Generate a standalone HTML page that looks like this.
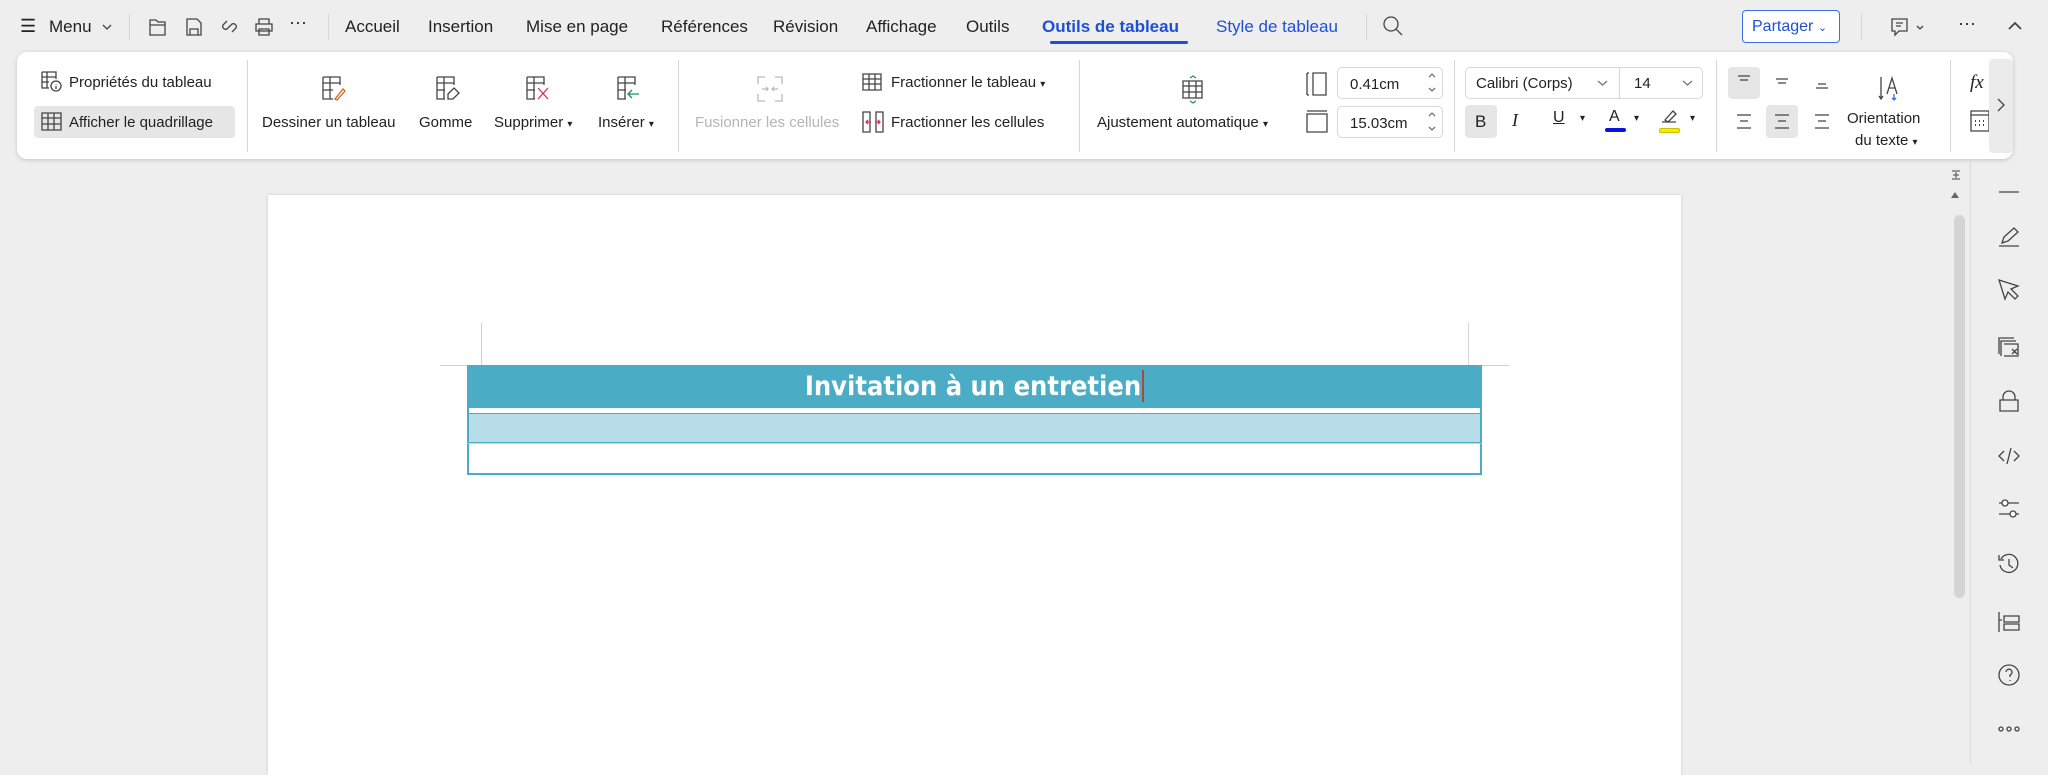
<!DOCTYPE html>
<html><head><meta charset="utf-8"><style>
*{margin:0;padding:0;box-sizing:border-box}
body{width:2048px;height:764px;background:#eeeeee;font-family:"Liberation Sans",sans-serif;color:#222;position:relative;overflow:hidden}
.a{position:absolute;white-space:nowrap}
.t{font-size:17px;top:17px}
.r{font-size:15px}
.sep{position:absolute;width:1px;background:#d6d6d6}
svg{position:absolute;overflow:visible}
svg *{fill:none;stroke:#444;stroke-width:1.3}
</style></head><body>

<!-- top bar -->
<div class="a" style="left:20px;top:16px;font-size:18px">☰</div>
<div class="a t" style="left:49px">Menu</div>
<svg style="left:102px;top:24px" width="10" height="6"><path d="M1 1l4 4 4-4"/></svg>
<div class="sep" style="left:129px;top:14px;height:26px"></div>
<svg style="left:148px;top:17px" width="20" height="20"><path d="M2 3h6l2 2h7v13H2z M2 8h15"/></svg>
<svg style="left:184px;top:17px" width="20" height="20"><path d="M3 2h10l4 4v12H3z M6 12h8v6H6z"/></svg>
<svg style="left:220px;top:17px" width="20" height="20"><path d="M8 11l4-4a3 3 0 0 1 4 4l-4 4 M11 8l-4 4a3 3 0 0 1-4-4l4-4"/></svg>
<svg style="left:254px;top:17px" width="20" height="20"><path d="M5 7V2h10v5 M2 7h16v7H2z M5 12h10v6H5z"/></svg>
<div class="a t" style="left:289px;top:12px;font-size:18px">···</div>
<div class="sep" style="left:328px;top:14px;height:26px"></div>
<div class="a t" style="left:345px">Accueil</div>
<div class="a t" style="left:428px">Insertion</div>
<div class="a t" style="left:526px">Mise en page</div>
<div class="a t" style="left:661px">Références</div>
<div class="a t" style="left:773px">Révision</div>
<div class="a t" style="left:866px">Affichage</div>
<div class="a t" style="left:966px">Outils</div>
<div class="a t" style="left:1042px;color:#1f4fd6;font-weight:bold">Outils de tableau</div>
<div class="a" style="left:1050px;top:41px;width:138px;height:3px;background:#1f4fd6;border-radius:2px"></div>
<div class="a t" style="left:1216px;color:#1f4fd6">Style de tableau</div>
<div class="sep" style="left:1366px;top:14px;height:26px"></div>
<svg style="left:1382px;top:15px" width="22" height="22"><circle cx="9" cy="9" r="7"/><path d="M14 14l6 6"/></svg>
<div class="a" style="left:1742px;top:10px;width:98px;height:33px;border:1px solid #3a6ee8;border-radius:4px;background:#fff;color:#1f4fd6;font-size:16px;padding:7px 0 0 9px">Partager <span style="font-size:11px">⌄</span></div>
<div class="sep" style="left:1861px;top:14px;height:26px"></div>
<svg style="left:1890px;top:17px" width="22" height="22"><path d="M2 2h15v12H9l-4 4v-4H2z M6 6h7 M6 9h5"/></svg>
<svg style="left:1916px;top:25px" width="8" height="5"><path d="M1 1l3 3 3-3"/></svg>
<div class="a t" style="left:1958px;top:13px;font-size:18px">···</div>
<svg style="left:2008px;top:22px" width="14" height="8"><path d="M1 7l6-6 6 6" style="stroke-width:1.8"/></svg>

<!-- ribbon -->
<div class="a" style="left:17px;top:52px;width:1996px;height:107px;background:#fff;border-radius:10px;box-shadow:0 1px 4px rgba(0,0,0,.18)"></div>
<svg style="left:41px;top:71px" width="22" height="22"><path d="M1 1h14v7 M1 1v16h7 M1 6h14 M1 11h7 M6 1v16"/><circle cx="15" cy="15" r="5"/><path d="M15 13v0.5 M15 15v3"/></svg>
<div class="a r" style="left:69px;top:74px">Propriétés du tableau</div>
<div class="a" style="left:34px;top:106px;width:201px;height:32px;background:#e6e6e6;border-radius:4px"></div>
<svg style="left:41px;top:112px" width="22" height="20"><path d="M1 1h19v17H1z M1 6h19 M1 12h19 M7 1v17 M13 1v17"/></svg>
<div class="a r" style="left:69px;top:114px">Afficher le quadrillage</div>
<div class="sep" style="left:247px;top:60px;height:92px"></div>

<svg style="left:322px;top:76px" width="24" height="26"><path d="M1 1h17v8 M1 1v22h10 M1 7h17 M1 14h10 M8 1v22"/><path d="M13 23l8-10 2 2-8 9z" style="stroke:#d0641e"/></svg>
<div class="a r" style="left:262px;top:114px">Dessiner un tableau</div>
<svg style="left:436px;top:76px" width="24" height="26"><path d="M1 1h17v8 M1 1v22h8 M1 7h17 M1 14h8 M8 1v22"/><path d="M12 18l6-6 5 5-6 6h-5z"/></svg>
<div class="a r" style="left:419px;top:114px">Gomme</div>
<svg style="left:526px;top:76px" width="24" height="26"><path d="M1 1h17v8 M1 1v22h8 M1 7h17 M1 14h8 M8 1v22"/><path d="M12 12l10 11 M22 12l-10 11" style="stroke:#d8304a"/></svg>
<div class="a r" style="left:494px;top:114px">Supprimer <span style="font-size:10px">▾</span></div>
<svg style="left:617px;top:76px" width="24" height="26"><path d="M1 1h17v8 M1 1v22h8 M1 7h17 M1 14h8 M8 1v22"/><path d="M22 18h-10 M15 14l-4 4 4 4" style="stroke:#1e9060"/></svg>
<div class="a r" style="left:598px;top:114px">Insérer <span style="font-size:10px">▾</span></div>
<div class="sep" style="left:678px;top:60px;height:92px"></div>

<svg style="left:757px;top:76px" width="26" height="26"><path d="M1 8V1h7 M18 1h7v7 M25 18v7h-7 M8 25H1v-7 M5 13h6 M9 11l2 2-2 2 M21 13h-6 M17 11l-2 2 2 2" style="stroke:#bbb"/></svg>
<div class="a r" style="left:695px;top:114px;color:#b5b5b5">Fusionner les cellules</div>
<svg style="left:862px;top:73px" width="20" height="18"><path d="M1 1h18v16H1z M1 6h18 M1 11h18 M7 1v16 M13 1v16"/></svg>
<div class="a r" style="left:891px;top:74px">Fractionner le tableau <span style="font-size:10px">▾</span></div>
<svg style="left:862px;top:111px" width="22" height="22"><path d="M1 1h7v20H1z M14 1h7v20h-7z"/><path d="M4 11h5 M18 11h-5 M6 9l-2 2 2 2 M16 9l2 2-2 2" style="stroke:#d8304a"/></svg>
<div class="a r" style="left:891px;top:114px">Fractionner les cellules</div>
<div class="sep" style="left:1079px;top:60px;height:92px"></div>

<svg style="left:1181px;top:75px" width="24" height="30"><path d="M2 6h19v17H2z M2 11h19 M2 17h19 M8 6v17 M15 6v17"/><path d="M9 3l3-2 3 2 M9 26l3 2 3-2" style="stroke:#1e9060"/></svg>
<div class="a r" style="left:1097px;top:114px">Ajustement automatique <span style="font-size:10px">▾</span></div>
<svg style="left:1306px;top:72px" width="22" height="24"><path d="M1 1v22 M1 1h2 M1 23h2 M7 1h13v22H7z"/></svg>
<svg style="left:1306px;top:110px" width="22" height="24"><path d="M1 1h20 M1 4h20v18H1z"/></svg>
<div class="a" style="left:1337px;top:67px;width:106px;height:32px;border:1px solid #d8d8d8;border-radius:5px;font-size:15px;padding:8px 0 0 12px">0.41cm</div>
<div class="a" style="left:1337px;top:106px;width:106px;height:32px;border:1px solid #d8d8d8;border-radius:5px;font-size:15px;padding:8px 0 0 12px">15.03cm</div>
<svg style="left:1428px;top:73px" width="8" height="20"><path d="M1 4l3-3 3 3 M1 15l3 3 3-3" style="stroke:#777"/></svg>
<svg style="left:1428px;top:112px" width="8" height="20"><path d="M1 4l3-3 3 3 M1 15l3 3 3-3" style="stroke:#777"/></svg>
<div class="sep" style="left:1454px;top:60px;height:92px"></div>

<div class="a" style="left:1465px;top:67px;width:238px;height:32px;border:1px solid #d8d8d8;border-radius:5px"></div>
<div class="sep" style="left:1619px;top:68px;height:30px"></div>
<div class="a r" style="left:1476px;top:75px">Calibri (Corps)</div>
<svg style="left:1597px;top:80px" width="11" height="6"><path d="M1 1l4.5 4 4.5-4" style="stroke:#777"/></svg>
<div class="a r" style="left:1634px;top:75px">14</div>
<svg style="left:1682px;top:80px" width="11" height="6"><path d="M1 1l4.5 4 4.5-4" style="stroke:#777"/></svg>
<div class="a" style="left:1465px;top:105px;width:32px;height:33px;background:#e6e6e6;border-radius:4px;font-size:17px;padding:7px 0 0 10px">B</div>
<div class="a" style="left:1512px;top:110px;font-size:18px;font-family:'Liberation Serif',serif;font-style:italic">I</div>
<div class="a" style="left:1553px;top:109px;font-size:16px;text-decoration:underline">U</div>
<div class="a" style="left:1580px;top:113px;font-size:10px">▾</div>
<div class="a" style="left:1609px;top:108px;font-size:16px">A</div>
<div class="a" style="left:1605px;top:128px;width:21px;height:4px;background:#0a14d8;border-radius:2px"></div>
<div class="a" style="left:1634px;top:113px;font-size:10px">▾</div>
<svg style="left:1660px;top:108px" width="20" height="16"><path d="M2 14h14 M5 12l8-9 3 3-8 8z"/></svg>
<div class="a" style="left:1659px;top:128px;width:21px;height:5px;background:#f2ee00;border-radius:2px;border:1px solid #c8c000"></div>
<div class="a" style="left:1690px;top:113px;font-size:10px">▾</div>
<div class="sep" style="left:1716px;top:60px;height:92px"></div>

<div class="a" style="left:1728px;top:67px;width:32px;height:32px;background:#e6e6e6;border-radius:4px"></div>
<svg style="left:1735px;top:74px" width="18" height="14"><path d="M3 2h12 M5 6h8"/></svg>
<svg style="left:1773px;top:74px" width="18" height="14"><path d="M3 5h12 M5 9h8"/></svg>
<svg style="left:1813px;top:74px" width="18" height="16"><path d="M5 10h8 M3 14h12"/></svg>
<svg style="left:1735px;top:114px" width="18" height="16"><path d="M2 1h14 M5 7h8 M2 14h14"/></svg>
<div class="a" style="left:1766px;top:105px;width:32px;height:33px;background:#e6e6e6;border-radius:4px"></div>
<svg style="left:1773px;top:114px" width="18" height="16"><path d="M2 1h14 M5 7h8 M2 14h14"/></svg>
<svg style="left:1813px;top:114px" width="18" height="16"><path d="M2 1h14 M5 7h8 M2 14h14"/></svg>
<svg style="left:1878px;top:76px" width="26" height="26"><path d="M3 1v22 M1 20l2 3 2-3 M9 18l5-16 5 16 M11 12h6"/><path d="M16 18v6 M14 22l2 2 2-2" style="stroke:#3a6ee8"/></svg>
<div class="a r" style="left:1847px;top:110px">Orientation</div>
<div class="a r" style="left:1855px;top:132px">du texte <span style="font-size:10px">▾</span></div>
<div class="sep" style="left:1950px;top:60px;height:92px"></div>
<div class="a" style="left:1970px;top:72px;font-size:19px;font-family:'Liberation Serif',serif;font-style:italic">fx</div>
<svg style="left:1970px;top:110px" width="20" height="22"><path d="M1 1h18v20H1z M1 5h18"/><path d="M5 11h1 M9 11h1 M13 11h1 M5 15h1 M9 15h1 M13 15h1" style="stroke-width:2"/></svg>
<div class="a" style="left:1989px;top:59px;width:24px;height:94px;background:#ebebeb;border-radius:4px"></div>
<svg style="left:1997px;top:98px" width="8" height="14"><path d="M1 1l6 6-6 6"/></svg>

<!-- page -->
<div class="a" style="left:268px;top:195px;width:1413px;height:580px;background:#fff;box-shadow:0 0 3px rgba(0,0,0,.15)"></div>
<div class="a" style="left:481px;top:323px;width:1px;height:43px;background:#d0d0d0"></div>
<div class="a" style="left:1468px;top:323px;width:1px;height:43px;background:#d8d8d8"></div>
<div class="a" style="left:440px;top:365px;width:1069px;height:1px;background:#d0d0d0"></div>
<div class="a" style="left:467px;top:365px;width:1015px;height:43px;background:#4bacc6"></div>
<div class="a" style="left:467px;top:408px;width:1015px;height:5px;background:#fff;border-left:2px solid #4bacc6;border-right:2px solid #4bacc6"></div>
<div class="a" style="left:467px;top:413px;width:1015px;height:31px;background:#b7dde8;border:2px solid #4bacc6;border-top:1px solid #4bacc6"></div>
<div class="a" style="left:467px;top:443px;width:1015px;height:32px;background:#fff;border:2px solid #4bacc6;border-top:1px solid #b7dde8"></div>
<div class="a" style="left:467px;top:370px;width:1015px;text-align:center;color:#fff;font-weight:bold;font-size:27px;font-family:'DejaVu Sans Condensed','DejaVu Sans',sans-serif">Invitation à un entretien<span style="display:inline-block;width:2px;height:32px;background:#b0483a;vertical-align:-7px;margin-left:1px"></span></div>

<!-- scrollbar -->
<svg style="left:1951px;top:170px" width="10" height="10"><path d="M1 1h8 M2 5h6 M5 2v6 M1 9h8" style="stroke:#666"/></svg>
<div class="a" style="left:1951px;top:192px;width:0;height:0;border-left:4px solid transparent;border-right:4px solid transparent;border-bottom:6px solid #666"></div>
<div class="a" style="left:1954px;top:215px;width:11px;height:383px;background:#d4d4d4;border-radius:6px"></div>
<div class="a" style="left:1970px;top:160px;width:1px;height:604px;background:#dcdcdc"></div>

<!-- sidebar icons -->
<svg style="left:1998px;top:191px" width="22" height="4"><path d="M1 1h20"/></svg>
<svg style="left:1998px;top:226px" width="22" height="22"><path d="M1 20h20 M4 17l2-6 10-9 4 4-10 9z"/></svg>
<svg style="left:1998px;top:279px" width="22" height="22"><path d="M1 1l19 6-7 3 7 7-3 3-7-7-3 7z"/></svg>
<svg style="left:1998px;top:336px" width="22" height="22"><path d="M3 20V5h15 M1 18V2h15 M6 8h14v12H6 M14 13l5 5 M19 13l-5 5"/></svg>
<svg style="left:1998px;top:390px" width="22" height="22"><path d="M2 10h18v11H2z M5 10V7a6 6 0 0 1 12 0v3"/></svg>
<svg style="left:1998px;top:445px" width="22" height="22"><path d="M6 6l-5 5 5 5 M16 6l5 5-5 5 M13 3l-4 16"/></svg>
<svg style="left:1998px;top:498px" width="22" height="22"><path d="M1 5h20 M1 16h20"/><circle cx="7" cy="5" r="3" style="fill:#fff"/><circle cx="15" cy="16" r="3" style="fill:#fff"/></svg>
<svg style="left:1998px;top:553px" width="22" height="22"><path d="M3 6a9 9 0 1 1-1 6 M1 2v5h5 M11 6v6l4 3"/></svg>
<svg style="left:1998px;top:611px" width="22" height="22"><path d="M1 1v20 M1 9h3 M6 5h15v6H6z M6 13h15v6H6z"/></svg>
<svg style="left:1998px;top:664px" width="22" height="22"><circle cx="11" cy="11" r="10"/><path d="M8 8a3 3 0 1 1 4 3v2 M12 16v1"/></svg>
<svg style="left:1998px;top:726px" width="22" height="6"><circle cx="3" cy="3" r="2"/><circle cx="11" cy="3" r="2"/><circle cx="19" cy="3" r="2"/></svg>
</body></html>
